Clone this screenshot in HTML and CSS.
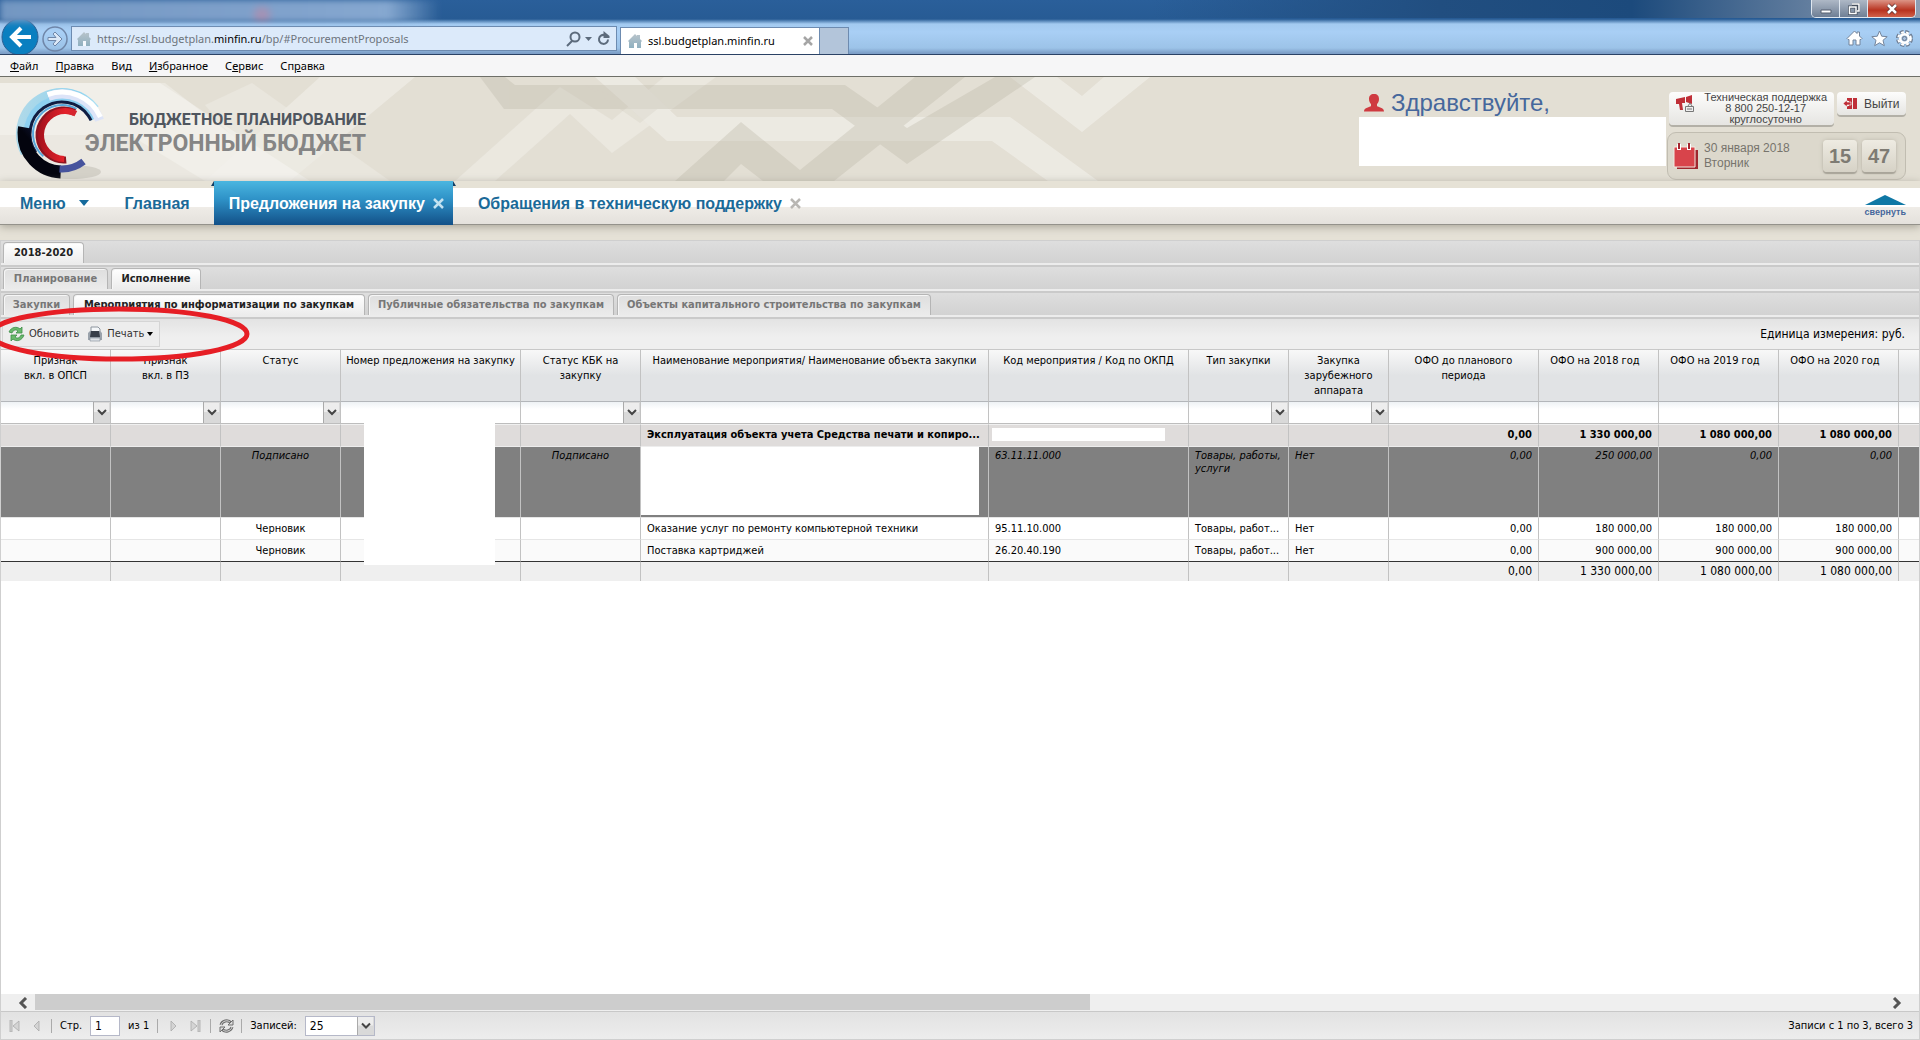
FILE: index.html
```html
<!DOCTYPE html>
<html lang="ru">
<head>
<meta charset="utf-8">
<title>Бюджетное планирование</title>
<link rel="stylesheet" href="styles.css">
</head>
<body>
<svg class="sprite" aria-hidden="true">
  <defs>
    <linearGradient id="gSky" x1="0" y1="0" x2="1" y2="1"><stop offset="0" stop-color="#d8f4fb"/><stop offset=".5" stop-color="#8fd3ee"/><stop offset="1" stop-color="#b9dbe8"/></linearGradient>
    <linearGradient id="gNavy" gradientUnits="userSpaceOnUse" x1="50" y1="88" x2="10" y2="45"><stop offset="0" stop-color="#03040e"/><stop offset=".6" stop-color="#1d2c68"/><stop offset="1" stop-color="#050c22"/></linearGradient>
    <linearGradient id="gRed" gradientUnits="userSpaceOnUse" x1="40" y1="25" x2="40" y2="78"><stop offset="0" stop-color="#b8303a"/><stop offset=".5" stop-color="#e3212a"/><stop offset="1" stop-color="#a3111c"/></linearGradient>
    <linearGradient id="gHouse" x1="0" y1="0" x2="0" y2="1"><stop offset="0" stop-color="#b9c4cb"/><stop offset="1" stop-color="#8fb0c0"/></linearGradient>
  </defs>
  <symbol id="site" viewBox="0 0 16 16"><path fill="url(#gHouse)" d="M1 8 8 1l2 2V2h3v4l2 2-1 1v6h-4v-5H7v5H2V9z"/><path fill="#fff" opacity=".7" d="M7 10h3v5H7z"/></symbol>
</svg>
<div class="window">
  <div class="chrome">
    <div class="titlebar">
      <div class="ghost"></div>
      <div class="winbtns">
        <button class="wb" aria-label="Свернуть окно"><svg width="12" height="12"><path d="M1 7h10v3H1z" fill="#fff" stroke="#555f6e"/></svg></button>
        <button class="wb" aria-label="Восстановить"><svg width="12" height="12" fill="none"><path d="M4 1h7v7H9M1.500 4h6.500v6.500H1.500z" stroke="#46505f" stroke-width="3"/><path d="M4 1h7v7H9M1.500 4h6.500v6.500H1.500z" stroke="#fff" stroke-width="1.500"/></svg></button>
        <button class="wb wb-close" aria-label="Закрыть"><svg width="12" height="12" fill="none"><path d="m2 2 8 8M10 2l-8 8" stroke="#5b3030" stroke-width="4"/><path d="m2 2 8 8M10 2l-8 8" stroke="#fff" stroke-width="2.500"/></svg></button>
      </div>
    </div>
    <div class="navrow">
      <button class="back" aria-label="Назад"><svg width="38" height="36" viewBox="0 0 38 36"><circle cx="19" cy="19" r="18" fill="#0a7fc0" stroke="#2c5f93"/><path d="M30 19H12M20 10l-9 9 9 9" fill="none" stroke="#fff" stroke-width="4"/></svg></button>
      <button class="fwd" aria-label="Вперёд"><svg width="26" height="26" viewBox="0 0 26 26" fill="none" stroke="#6f86a8"><circle cx="13" cy="13" r="12" stroke-width="1.500"/><path d="M6 11.500h8L11 8l2-2 7 7-7 7-2-2 3-3.500H6z" fill="#dbe8f7"/></svg></button>
      <div class="address">
        <svg width="16" height="16"><use href="#site"/></svg>
        <span class="url">https://ssl.budgetplan.<b>minfin.ru</b>/bp/#ProcurementProposals</span>
        <svg width="44" height="16" viewBox="0 0 44 16" fill="none" stroke="#5c6b7c" stroke-width="2"><circle cx="9" cy="6" r="4.500"/><path d="m6 10-5 5"/><path d="M19 6h7l-3.500 4z" fill="#5c6b7c" stroke="none"/><path d="M42 8.500A4.500 4.500 0 1 1 38.500 4"/><path d="M37.500 0v7h6V5z" fill="#5c6b7c" stroke="none"/></svg>
      </div>
      <div class="btab"><svg width="16" height="16"><use href="#site"/></svg><span>ssl.budgetplan.minfin.ru</span><svg width="10" height="10"><path d="m1 1 8 8M9 1 1 9" stroke="#a5a5a5" stroke-width="2.500"/></svg></div>
      <div class="newtab"></div>
      <div class="tools">
        <svg width="17" height="17" viewBox="0 0 17 17"><path d="M1 8.500 8.500 1 11 3.500V2h2.500v4L16 8.500l-1 1h-1V15h-4v-5H7v5H3V9.500H2z" fill="#fff" stroke="#73849b"/></svg>
        <svg width="17" height="17" viewBox="0 0 17 17"><path d="m8.500 1 2.200 5.200 5.500.5-4.200 3.600 1.300 5.400-4.800-2.900-4.800 2.900L5 10.300.8 6.700l5.500-.5z" fill="#fff" stroke="#73849b"/></svg>
        <svg width="17" height="17" viewBox="0 0 17 17"><circle cx="8.500" cy="8.500" r="6.500" fill="none" stroke="#6b7b91" stroke-width="4" stroke-dasharray="3.500 1.600"/><circle cx="8.500" cy="8.500" r="6.300" fill="none" stroke="#fff" stroke-width="2" stroke-dasharray="2.800 2.300"/><circle cx="8.500" cy="8.500" r="4.300" fill="#9db7d3" stroke="#fff" stroke-width="2.500"/><circle cx="8.500" cy="8.500" r="2" fill="#a9c3e2" stroke="#6b7b91"/></svg>
      </div>
    </div>
  </div>
  <nav class="menubar"><a href="#"><u>Ф</u>айл</a><a href="#"><u>П</u>равка</a><a href="#">Ви<u>д</u></a><a href="#"><u>И</u>збранное</a><a href="#">С<u>е</u>рвис</a><a href="#">Сп<u>р</u>авка</a></nav>

  <header class="banner">
    <svg class="pattern" width="1200" height="104" viewBox="0 0 1200 104" aria-hidden="true">
      <g fill="#fff" opacity=".34">
        <path d="M0 6h165l125 98H205L130 58H0z" opacity=".8"/>
        <path d="M320 0h95L290 104H205z" opacity=".9"/><path d="M205 28 252 6 390 104H270z" opacity=".6"/>
        <path d="M455 104 565 8h12l33 34 95-42h-45l-48 42-42 34-2-38-73 66z" opacity="0"/>
        <path d="m455 104 105-94 52 33 52-43h52L612 76l-42-39-75 67z" opacity=".75"/>
        <path d="M595 0h40l42 40h333l88 64h-50l-56-40H667z"/>
        <path d="m1010 0 72 55L1150 0h-46l-22 19-25-19z"/>
      </g>
      <path d="M0 6h160l150 98H0z" fill="#fff" opacity=".3"/>
      <g fill="#b9b4a4" opacity=".32">
        <path d="m480 0 24 32h328l75 55L1035 0h-40l-88 51-62-43H515L505 0z"/>
        <path d="m675 104 66-59 59 48L915 0h50L834 104h-71l-22-17-17 17z"/>
        <path d="m585 8 55 38 45-36h-40l-20 14z" opacity=".5"/>
      </g>
    </svg>
    <div class="brand">
      <svg class="logo" width="100" height="97" viewBox="0 0 100 97" fill="none" aria-hidden="true">
        <ellipse cx="58" cy="88" rx="30" ry="7" fill="#8f8b80" opacity=".25"/>
        <circle cx="49" cy="50" r="42" stroke="url(#gSky)" stroke-width="8" pathLength="360" stroke-dasharray="170 190" transform="rotate(153 49 50)"/>
        <circle cx="49" cy="50" r="35" stroke="#8dd0f0" stroke-width="7" pathLength="360" stroke-dasharray="175 185" transform="rotate(160 49 50)"/>
        <circle cx="49" cy="50" r="40" stroke="#dde4f8" stroke-width="9" pathLength="360" stroke-dasharray="90 270" transform="rotate(250 49 50)"/>
        <circle cx="49" cy="50" r="42" stroke="#fff" stroke-width="5" pathLength="360" stroke-dasharray="86 274" transform="rotate(250 49 50)"/>
        <circle cx="49" cy="50" r="32" stroke="#101d42" stroke-width="3" pathLength="360" stroke-dasharray="190 170" transform="rotate(145 49 50)"/>
        <circle cx="49" cy="50" r="29" stroke="#58a9dc" stroke-width="2" pathLength="360" stroke-dasharray="170 190" transform="rotate(130 49 50)"/>
        <circle cx="49" cy="50" r="38" stroke="url(#gNavy)" stroke-width="13" pathLength="360" stroke-dasharray="98 262" transform="rotate(92 49 50)"/>
        <circle cx="49" cy="50" r="35" stroke="#46539d" stroke-width="7" pathLength="360" stroke-dasharray="42 318" transform="rotate(52 49 50)"/>
        <circle cx="51" cy="51" r="25" stroke="#8e1420" stroke-width="7" pathLength="360" stroke-dasharray="210 150" transform="rotate(85 51 51)"/>
        <circle cx="52" cy="51" r="24" stroke="url(#gRed)" stroke-width="6" pathLength="360" stroke-dasharray="205 155" transform="rotate(92 52 51)"/>
      </svg>
      <h1 class="names"><span class="name-top">БЮДЖЕТНОЕ ПЛАНИРОВАНИЕ</span><span class="name-main">ЭЛЕКТРОННЫЙ БЮДЖЕТ</span></h1>
    </div>
    <div class="hello">
      <div class="hello-line"><svg width="20" height="18" viewBox="0 0 20 18"><path d="M10 0c3.500 0 5 2 5 5 0 2.500-1 4-2 5v2c1 1.500 7 1 7 5.500H0C0 13 6 13.500 7 12v-2C6 9 5 7.500 5 5c0-3 1.500-5 5-5z" fill="#cf3a40"/></svg><span>Здравствуйте,</span></div>
      <div class="hello-name"></div>
    </div>
    <div class="side">
      <div class="side-top">
        <button class="pill support"><svg width="20" height="18" viewBox="0 0 20 18"><path d="M1 4l9-2v6H7l1 7H5L4 9H1zM11 2l6-2v9l-6-2z" fill="#bf2f37"/><path d="M10.500 11.500h8v5h-8zM13 11l2-3 2 3M12 14h5" fill="#eee" stroke="#777"/></svg><span>Техническая поддержка<br>8 800 250-12-17<br>круглосуточно</span></button>
        <button class="pill exit"><svg width="14" height="13" viewBox="0 0 14 13"><path d="M10 1h4v11h-4zM4 1h5v11H4V9h2V4H4z" fill="#bf2f37"/><path d="M0 6.500 4 3v2h4v3H4v2z" fill="#bf2f37" stroke="#fff" stroke-width=".6"/></svg><span>Выйти</span></button>
      </div>
      <div class="datebox">
        <svg width="26" height="27" viewBox="0 0 26 27"><path d="M4 7h21v19H4z" fill="#9f262e"/><path d="M1 4h21v20H1z" fill="#d8444b" stroke="#f3e9e0"/><path d="M6 1v6M16 1v6" stroke="#fff" stroke-width="4"/><path d="M6 0v6M16 0v6" stroke="#a52830" stroke-width="2"/></svg>
        <span class="date">30 января 2018<br>Вторник</span>
        <b class="digit">15</b><b class="digit">47</b>
      </div>
    </div>
  </header>

  <nav class="mainnav">
    <a href="#" class="ni">Меню <svg width="10" height="6"><path d="M0 0h10L5 6z" fill="#156a9c"/></svg></a>
    <a href="#" class="ni">Главная</a>
    <a href="#" class="ni active">Предложения на закупку <svg width="11" height="11"><path d="m1 1 9 9M10 1l-9 9" stroke="#c3e2f1" stroke-width="2.500"/></svg></a>
    <a href="#" class="ni">Обращения в техническую поддержку <svg width="11" height="11"><path d="m1 1 9 9M10 1l-9 9" stroke="#b9b7b3" stroke-width="2.500"/></svg></a>
    <a href="#" class="collapse"><svg width="41" height="10"><path d="M0 10 20 0l21 10z" fill="#0f78a5"/></svg><span>свернуть</span></a>
  </nav>

  <main class="panel">
    <div class="tabs"><button class="tab on t1">2018-2020</button></div>
    <div class="tabs"><button class="tab t2">Планирование</button><button class="tab on t3">Исполнение</button></div>
    <div class="tabs"><button class="tab t4">Закупки</button><button class="tab on t5">Мероприятия по информатизации по закупкам</button><button class="tab t6">Публичные обязательства по закупкам</button><button class="tab t7">Объекты капитального строительства по закупкам</button></div>
    <div class="toolbar">
      <div class="group">
        <button class="tbtn"><svg width="17" height="16" viewBox="0 0 17 16"><path d="M1 6C3 1 9 0 12 3l2-2v6H8l2-2C8 3 5 4 4 7zM16 9c-2 6-8 7-11 4l-2 2V9h6l-2 2c2 2 5 1 6-2z" fill="#69b96c" stroke="#3c8d47" stroke-width=".8"/></svg>Обновить</button>
        <button class="tbtn"><svg width="16" height="16" viewBox="0 0 16 16"><path d="M4 1h7l2 2v4H4z" fill="#f5f7f9" stroke="#8d959e"/><path d="M1 7l2-2h10l2 2v7H1z" fill="#9aa2ab"/><path d="M4 5h8l1 6H3z" fill="#383f4a"/><path d="M3 12h10v3H3z" fill="#dfe3e8" stroke="#808994" stroke-width=".6"/></svg>Печать<svg class="caret" width="6" height="4"><path d="M0 0h6L3 4z"/></svg></button>
      </div>
      <span class="unit">Единица измерения: руб.</span>
      <svg class="mark" width="260" height="60" viewBox="-10 0 260 60" aria-hidden="true"><ellipse cx="119" cy="30" rx="128" ry="25" fill="none" stroke="#e61e25" stroke-width="5"/></svg>
    </div>
    <div class="gridwrap">
      <table class="grid">
        <colgroup><col class="c110"><col class="c110"><col class="c120"><col class="c180"><col class="c120"><col class="c348"><col class="c200"><col class="c100"><col class="c100"><col class="c150"><col class="c120"><col class="c120"><col class="c120"><col></colgroup>
        <thead>
          <tr class="head"><th>Признак<br>вкл. в ОПСП</th><th>Признак<br>вкл. в ПЗ</th><th>Статус</th><th>Номер предложения на закупку</th><th>Статус КБК на<br>закупку</th><th>Наименование мероприятия/ Наименование объекта закупки</th><th>Код мероприятия / Код по ОКПД</th><th>Тип закупки</th><th>Закупка<br>зарубежного<br>аппарата</th><th>ОФО до планового<br>периода</th><th class="yr">ОФО на 2018 год</th><th class="yr">ОФО на 2019 год</th><th class="yr">ОФО на 2020 год</th><th></th></tr>
          <tr class="filter"><td><select aria-label="Признак вкл. в ОПСП"><option></option></select></td><td><select aria-label="Признак вкл. в ПЗ"><option></option></select></td><td><select aria-label="Статус"><option></option></select></td><td><input aria-label="Номер предложения"></td><td><select aria-label="Статус КБК"><option></option></select></td><td><input aria-label="Наименование"></td><td><input aria-label="Код"></td><td><select aria-label="Тип закупки"><option></option></select></td><td><select aria-label="Закупка зарубежного аппарата"><option></option></select></td><td><input aria-label="ОФО до планового периода"></td><td><input aria-label="ОФО на 2018 год"></td><td><input aria-label="ОФО на 2019 год"></td><td><input aria-label="ОФО на 2020 год"></td><td></td></tr>
        </thead>
        <tbody>
          <tr class="sum"><td></td><td></td><td></td><td></td><td></td><td>Эксплуатация объекта учета Средства печати и копиро...</td><td class="code"><div class="blank"></div></td><td></td><td></td><td class="n">0,00</td><td class="n">1 330 000,00</td><td class="n">1 080 000,00</td><td class="n">1 080 000,00</td><td></td></tr>
          <tr class="dark"><td></td><td></td><td class="c">Подписано</td><td></td><td class="c">Подписано</td><td class="cover"><div></div></td><td>63.11.11.000</td><td class="wrap">Товары, работы, услуги</td><td>Нет</td><td class="n">0,00</td><td class="n">250 000,00</td><td class="n">0,00</td><td class="n">0,00</td><td></td></tr>
          <tr><td></td><td></td><td class="c">Черновик</td><td></td><td></td><td>Оказание услуг по ремонту компьютерной техники</td><td>95.11.10.000</td><td>Товары, работ...</td><td>Нет</td><td class="n">0,00</td><td class="n">180 000,00</td><td class="n">180 000,00</td><td class="n">180 000,00</td><td></td></tr>
          <tr class="alt"><td></td><td></td><td class="c">Черновик</td><td></td><td></td><td>Поставка картриджей</td><td>26.20.40.190</td><td>Товары, работ...</td><td>Нет</td><td class="n">0,00</td><td class="n">900 000,00</td><td class="n">900 000,00</td><td class="n">900 000,00</td><td></td></tr>
        </tbody>
        <tfoot><tr><td></td><td></td><td></td><td></td><td></td><td></td><td></td><td></td><td></td><td class="n">0,00</td><td class="n">1 330 000,00</td><td class="n">1 080 000,00</td><td class="n">1 080 000,00</td><td></td></tr></tfoot>
      </table>
      <div class="redact"></div>
    </div>
    <div class="hscroll"><svg width="10" height="12"><path d="m8 1-5 5 5 5" fill="none" stroke="#555" stroke-width="3"/></svg><div class="track"><div class="thumb"></div></div><svg width="10" height="12"><path d="m2 1 5 5-5 5" fill="none" stroke="#555" stroke-width="3"/></svg></div>
    <div class="pager">
      <button aria-label="Первая"><svg width="11" height="12"><path d="M1 0h2v12H1zM10 1v10L4 6z" fill="#d4d4d4" stroke="#a9a9a9" stroke-width=".8"/></svg></button>
      <button aria-label="Предыдущая"><svg width="11" height="12"><path d="M8 1v10L3 6z" fill="#d4d4d4" stroke="#a9a9a9" stroke-width=".8"/></svg></button>
      <i></i><label for="pg">Стр.</label><input id="pg" value="1"><span class="of">из 1</span><i></i>
      <button aria-label="Следующая"><svg width="11" height="12"><path d="M3 1v10l5-5z" fill="#d4d4d4" stroke="#a9a9a9" stroke-width=".8"/></svg></button>
      <button aria-label="Последняя"><svg width="11" height="12"><path d="M1 1v10l6-5zM8 0h2v12H8z" fill="#d4d4d4" stroke="#a9a9a9" stroke-width=".8"/></svg></button>
      <i></i>
      <button aria-label="Обновить список"><svg width="15" height="14" viewBox="0 0 15 14" fill="none"><path d="M2 6c1-4 7-6 10-2M13 8c-1 4-7 6-10 2" stroke="#6e6e6e" stroke-width="3"/><path d="M2 6c1-4 7-6 10-2M13 8c-1 4-7 6-10 2" stroke="#ddd"/><path d="M14 1v5H9zM1 13V8h5z" fill="#ddd" stroke="#6e6e6e"/></svg></button>
      <i></i><label for="ps">Записей:</label><select id="ps"><option>25</option></select>
      <span class="total">Записи с 1 по 3, всего 3</span>
    </div>
  </main>
</div>
</body>
</html>
```
FILE: styles.css
```css
* { box-sizing: border-box; }
body { margin: 0; font: 11px/14px "DejaVu Sans Condensed", "DejaVu Sans", sans-serif; color: #000; background: #e5e1d6; }
button, input, select { font: inherit; color: inherit; margin: 0; padding: 0; border: 0; background: none; border-radius: 0; }
a { color: inherit; text-decoration: none; }
svg { display: block; flex: none; }
.sprite { position: absolute; width: 0; height: 0; }
.window { min-height: 100vh; display: flex; flex-direction: column; }

/* browser chrome */
.chrome { background: linear-gradient(#2a5f9a 0, #275b94 19px, #a3caf0 24px, #a9cff5 32px, #9cc3e8 48px, #7d9fc8 53px); border-bottom: 1px solid #2b4265; }
.titlebar { height: 18px; display: flex; justify-content: space-between; align-items: flex-start; background: linear-gradient(90deg, transparent 60%, #214e80 75%, #1c4a7c 85%, #8e9eb4); }
.ghost { width: 440px; height: 22px; background: radial-gradient(circle at 262px 15px, #a592b4 4px, transparent 12px), linear-gradient(90deg, #7397c2, #7fa1cb 60%, #86a8d0 88%, transparent); filter: blur(3px); }
.winbtns { display: flex; margin-right: 4px; border: 1px solid #dfe7f0; border-top: 0; border-radius: 0 0 5px 5px; overflow: hidden; }
.wb { width: 28px; height: 17px; display: grid; place-items: center; background: linear-gradient(#aeb8c6, #6f7f95); border-right: 1px solid #dfe7f0; }
.wb-close { width: 47px; border: 0; background: linear-gradient(#dc9486, #b8321f 60%, #d0614a); }
.navrow { height: 36px; display: flex; align-items: flex-end; }
.back { margin-left: 1px; height: 36px; overflow: hidden; }
.fwd { margin: 0 3px 2px; }
.address { width: 546px; height: 25px; margin-bottom: 3px; padding: 0 6px 0 4px; border: 1px solid #6d8bb0; background: #dceafa; display: flex; align-items: center; gap: 5px; font: 11px/16px "Noto Sans", sans-serif; color: #6d747c; }
.address b { font-weight: 400; color: #000; }
.url { flex: 1; }
.btab { width: 200px; height: 27px; margin-left: 3px; padding: 0 6px; background: #fff; border: 1px solid #6d8bb0; border-bottom: 0; display: flex; align-items: center; gap: 5px; font: 11px/16px "Noto Sans", sans-serif; }
.btab span { flex: 1; }
.newtab { width: 29px; height: 27px; background: #b3c5da; border: 1px solid #6d8bb0; border-width: 1px 1px 0 0; }
.tools { margin-left: auto; display: flex; gap: 8px; padding: 0 7px 7px; }
.menubar { height: 22px; display: flex; gap: 17px; padding: 0 10px; background: #f6f6f7; border-bottom: 1px solid #6e6f68; font: 11px/21px "Noto Sans", sans-serif; }

/* banner */
.banner { position: relative; height: 104px; display: flex; background: #e3dfd4; overflow: hidden; font-family: "Liberation Sans", sans-serif; }
.pattern { position: absolute; left: 0; top: 0; }
.brand { position: relative; display: flex; margin-right: auto; padding: 7px 0 0 13px; }
.names { width: 253px; margin: 26px 0 0; display: flex; flex-direction: column; align-items: flex-end; font: 700 16px/20px Roboto, sans-serif; white-space: nowrap; }
.name-top { color: #4f565f; }
.name-main { font-size: 23px; line-height: 28px; color: #858585; }
.hello { position: relative; width: 307px; padding-top: 12px; }
.hello-line { height: 28px; padding-left: 5px; display: flex; align-items: center; gap: 7px; font-size: 24px; line-height: 28px; color: #46679c; }
.hello-name { height: 49px; background: #fff; }
.side { position: relative; width: 254px; padding: 15px 14px 0 1px; }
.side-top { display: flex; justify-content: space-between; align-items: flex-start; padding-left: 2px; height: 40px; }
.pill { display: flex; align-items: center; white-space: nowrap; color: #444; background: linear-gradient(#fdfdfc, #e6e5e2); border-radius: 4px; box-shadow: 0 2px 0 #b3b0a7; }
.support { width: 165px; height: 33px; padding: 0 7px 0 6px; justify-content: space-between; font: 11px/11px "Liberation Sans", sans-serif; text-align: center; }
.support svg { align-self: flex-start; margin-top: 3px; }
.exit { width: 69px; height: 23px; padding: 0 6px; gap: 7px; font: 12px/14px "Liberation Sans", sans-serif; }
.datebox { height: 48px; padding: 0 9px 0 5px; display: flex; align-items: center; gap: 5px; background: #dcd8cc; border: 1px solid #c1bdb1; border-radius: 9px; font-size: 12px; line-height: 15px; color: #77746c; }
.date { flex: 1; }
.digit { width: 34px; height: 32px; text-align: center; font-size: 20px; line-height: 32px; color: #7e7b73; background: linear-gradient(#eeebe2, #d6d2c6); border-radius: 4px; box-shadow: 0 2px 1px #a9a59a, 0 0 4px #bdb9ad; }

/* main navigation */
.mainnav { position: relative; height: 44px; padding-left: 7px; display: flex; font: 700 16px/37px "Liberation Sans", sans-serif; color: #1b6a98; background: linear-gradient(#e6e2d6 7px, #fff 7px, #fff 26px, #efece7 26px, #e4e1dc 43px); border-bottom: 1px solid #94928b; box-shadow: 0 2px 8px #aaa69a; }
.ni { display: flex; align-items: center; gap: 8px; height: 44px; padding: 0 13px; }
.ni:nth-child(1) { gap: 13px; padding-right: 23px; }
.ni:nth-child(2) { padding-right: 24px; }
.ni:nth-child(4) { padding-left: 25px; }
.active { position: relative; padding: 0 9px 0 15px; color: #fff; background: linear-gradient(#4bb6e0, #2f93c8 40%, #125088); }
.active::before, .active::after { content: ""; position: absolute; top: 0; border-bottom: 5px solid #143e63; }
.active::before { right: 100%; border-left: 3px solid transparent; }
.active::after { left: 100%; border-right: 3px solid transparent; }
.collapse { margin: 14px 14px 0 auto; display: flex; flex-direction: column; align-items: center; font-size: 9px; line-height: 14px; color: #46679c; }

/* work area */
.panel { flex: 1; margin-top: 15px; display: flex; flex-direction: column; border: 1px solid #cfcfcf; background: #fff; position: relative; }
.tabs { height: 26px; padding: 1px 2px 0; display: flex; gap: 3px; background: linear-gradient(#dedede, #d2d2d2 22px, #ececec 22px, #ececec 24px, #cacaca 24px); }
.tab { height: 21px; padding: 0; text-align: center; white-space: nowrap; font-weight: 700; color: #777; background: linear-gradient(#dedede, #ebebeb); border: 1px solid #b5b5b5; border-bottom: 0; border-radius: 4px 4px 0 0; box-shadow: inset 1px 1px #f6f6f6; }
.tab.on { color: #222; background: linear-gradient(#fff, #ececec); }
.t1 { width: 81px; } .t2 { width: 105px; } .t3 { width: 90px; } .t4 { width: 67px; } .t5 { width: 292px; } .t6 { width: 246px; } .t7 { width: 314px; }
.toolbar { position: relative; z-index: 2; height: 30px; display: flex; align-items: center; justify-content: space-between; padding: 0 14px 0 1px; background: linear-gradient(#e3e3e3, #efefef 60%); }
.group { width: 158px; height: 26px; padding-left: 5px; display: flex; gap: 8px; border: 1px solid #d5d5d5; background: #ededed; }
.tbtn { display: flex; align-items: center; gap: 4px; color: #333; }
.caret { margin-left: -1px; }
.unit { font-size: 12px; }
.mark { position: absolute; left: -11px; top: -15px; pointer-events: none; }

.gridwrap { position: relative; flex: 1; overflow: hidden; }
.grid { width: 100%; table-layout: fixed; border-collapse: separate; border-spacing: 0; }
.c100 { width: 100px; } .c110 { width: 110px; } .c120 { width: 120px; } .c150 { width: 150px; } .c180 { width: 180px; } .c200 { width: 200px; } .c348 { width: 348px; }
.grid th, .grid td { padding: 0 6px; border-right: 1px solid #c2c2c2; border-bottom: 1px solid #e6e6e6; white-space: nowrap; text-align: left; vertical-align: top; }
.grid th:last-child, .grid td:last-child { border-right: 0; }
.grid .head th { height: 53px; padding: 3px 4px 0; font-weight: 400; line-height: 15px; text-align: center; border-top: 1px solid #c8c8c8; border-bottom-color: #b3b6ba; background: linear-gradient(#f8f8f8, #e1e3e5 50%); }
.grid .head .yr { padding-right: 11px; }
.grid .filter td { height: 22px; padding: 0; border-bottom-color: #bdbdbd; background: linear-gradient(#eef2f5, #fff 7px); }
.filter select, .filter input { display: block; width: 100%; height: 21px; }
select { appearance: none; background: url("data:image/svg+xml,%3Csvg xmlns='http://www.w3.org/2000/svg' width='17' height='21'%3E%3Cpath d='M0 0h17v21H0z' fill='%23d9d9d9'/%3E%3Cpath d='M1 1h15v9H1z' fill='%23ededed'/%3E%3Cpath d='M.5 0v21' stroke='%23aaa'/%3E%3Cpath d='m5 8 4 4 4-4' fill='none' stroke='%23444' stroke-width='2'/%3E%3C/svg%3E") right center no-repeat; }
.grid tbody td { height: 21px; line-height: 21px; }
.grid .sum td { height: 23px; line-height: 20px; font-weight: 700; background: #dfdcdb; border-top: 1px solid #f0f0f0; border-bottom-color: #ededed; }
.grid .code { padding: 3px 3px 0; }
.blank { width: 173px; height: 13px; background: #fff; }
.grid .dark td { height: 71px; padding-top: 2px; line-height: 13px; font-style: italic; background: #808080; }
.grid .dark .wrap { white-space: normal; }
.grid .dark .cover { padding: 0 9px 0 0; }
.cover div { height: 68px; background: #fff; }
.grid .alt td { background: #fafafa; border-bottom-color: #333; }
.grid tfoot td { height: 19px; line-height: 18px; font-size: 12px; background: #efefef; border-bottom: 0; }
.grid .c { text-align: center; }
.grid .n { text-align: right; }
.redact { position: absolute; left: 363px; top: 74px; width: 131px; height: 142px; background: #fff; }

.hscroll { height: 17px; padding: 0 17px; display: flex; align-items: center; gap: 7px; background: #efefef; }
.track { flex: 1; height: 17px; }
.thumb { width: 57%; height: 16px; background: #cdcdcd; }
.pager { height: 28px; padding: 0 6px; display: flex; align-items: center; gap: 8px; border-top: 1px solid #c8c8c8; background: linear-gradient(#e2e2e2, #ededed); }
.pager button { width: 14px; display: flex; justify-content: center; }
.pager i { width: 1px; height: 14px; background: #aaa; }
.pager input { width: 30px; height: 20px; padding-left: 4px; border: 1px solid #b5b8c8; background: #fff; font-size: 12px; }
.pager select { width: 70px; height: 20px; padding-left: 4px; border: 1px solid #b5b8c8; background-color: #fff; font-size: 12px; }
.total { margin-left: auto; }
```
